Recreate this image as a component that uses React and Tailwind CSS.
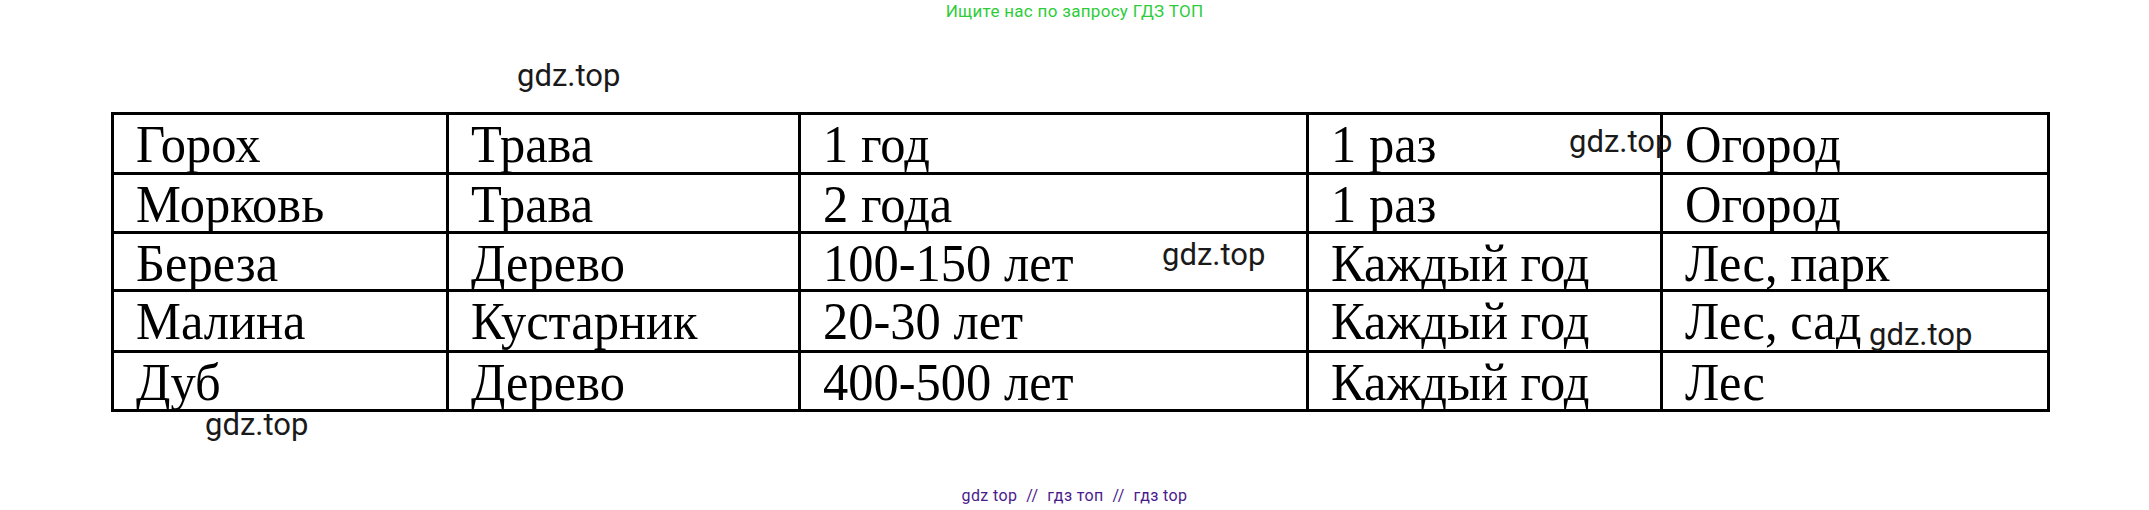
const rows = [
  ['Горох', 'Трава', '1 год', '1 раз', 'Огород'],
  ['Морковь', 'Трава', '2 года', '1 раз', 'Огород'],
  ['Береза', 'Дерево', '100-150 лет', 'Каждый год', 'Лес, парк'],
  ['Малина', 'Кустарник', '20-30 лет', 'Каждый год', 'Лес, сад'],
  ['Дуб', 'Дерево', '400-500 лет', 'Каждый год', 'Лес'],
]

const rowHeights = ['h-[60px]', 'h-[59px]', 'h-[58px]', 'h-[61px]', 'h-[59px]']

// watermark overlay
function Mark({ className }) {
  return (
    <span className={'absolute text-[31px] leading-none text-[#1a1a1a] font-["Roboto",sans-serif] ' + className}>
      gdz.top
    </span>
  )
}

export default function App() {
  return (
    <div className="relative w-[2149px] h-[510px] bg-white flex flex-col overflow-hidden">
      <p className="mt-[3px] text-center text-[17px] tracking-[0.3px] leading-none text-[#2ecc3a] font-['Roboto',sans-serif]">
        Ищите нас по запросу ГДЗ ТОП
      </p>

      <div className="mt-[92px] ml-[111px] w-fit grid grid-cols-[335px_352px_508px_354px_387px] border-l-[3px] border-t-[3px] border-black font-['Liberation_Serif',serif] text-black">
        {rows.map((row, i) =>
          row.map((cell, j) => (
            <div
              key={i + '-' + j}
              className={'border-r-[3px] border-b-[3px] border-black pl-[22px] pt-[5px] text-[50.5px] leading-none whitespace-nowrap ' + rowHeights[i]}
            >
              <span className="inline-block origin-bottom-left scale-y-[1.04]">{cell}</span>
            </div>
          ))
        )}
      </div>

      <p className="mt-[76px] text-center text-[16px] tracking-[0.4px] leading-none text-[#4a1a8c] font-['Roboto',sans-serif] whitespace-pre">
        {'gdz top  //  гдз топ  //  гдз top'}
      </p>

      <Mark className="left-[517px] top-[60px]" />
      <Mark className="left-[1569px] top-[126px]" />
      <Mark className="left-[1162px] top-[239px]" />
      <Mark className="left-[1869px] top-[319px]" />
      <Mark className="left-[205px] top-[409px]" />
    </div>
  )
}
